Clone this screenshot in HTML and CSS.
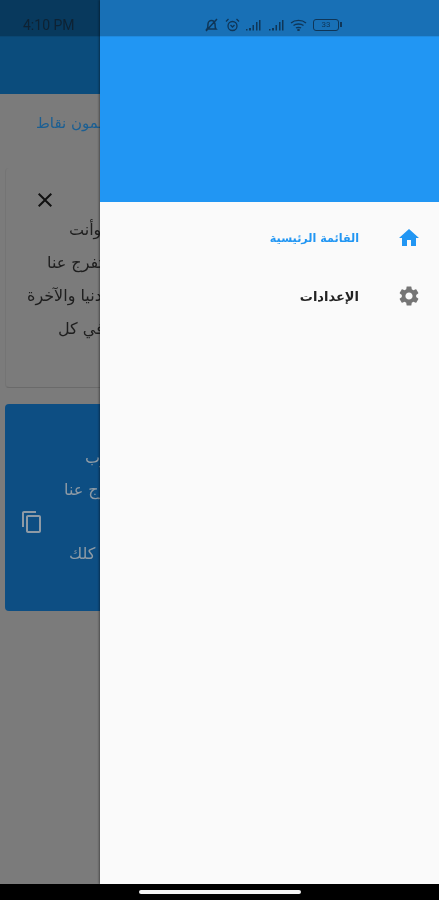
FILE: index.html
```html
<!DOCTYPE html>
<html lang="ar">
<head>
    <meta charset="UTF-8">
    <meta name="viewport" content="width=device-width, initial-scale=1.0">
    <title>القائمة الرئيسية</title>
    <link rel="stylesheet" href="styles.css">
</head>
<body>
    <div class="screen">
        <div class="app">
            <div class="app-bar"></div>
            <div class="content">
                <p class="points" dir="rtl">مضمون نقاط</p>
                <div class="card plain">
                    <svg class="close-icon" viewBox="0 0 24 24"><path d="M19 6.41 17.59 5 12 10.59 6.41 5 5 6.41 10.59 12 5 17.59 6.41 19 12 13.41 17.59 19 19 17.59 13.41 12z"/></svg>
                    <div class="dua" dir="rtl">
                        <p>اللهم إني أسألك وأنت</p>
                        <p>رب العالمين أن تفرج عنا</p>
                        <p>وترزقنا خير الدنيا والآخرة</p>
                        <p>وأن توفقنا في كل</p>
                    </div>
                </div>
                <div class="card blue">
                    <svg class="copy-icon" viewBox="0 0 24 24"><path d="M16 1H4c-1.1 0-2 .9-2 2v14h2V3h12V1zm3 4H8c-1.1 0-2 .9-2 2v14c0 1.1.9 2 2 2h11c1.1 0 2-.9 2-2V7c0-1.1-.9-2-2-2zm0 16H8V7h11v14z"/></svg>
                    <div class="dua" dir="rtl">
                        <p>اللهم إني أسألك يا رب</p>
                        <p>رب العالمين أن تفرج عنا</p>
                        <p>&nbsp;</p>
                        <p>وأن أكون من أهل كلك</p>
                    </div>
                </div>
            </div>
        </div>

        <div class="drawer" dir="rtl">
            <div class="drawer-header"></div>
            <div class="drawer-list">
                <div class="drawer-item active">
                    <svg viewBox="0 0 24 24"><path d="M10 20v-6h4v6h5v-8h3L12 3 2 12h3v8z"/></svg>
                    <span>القائمة الرئيسية</span>
                </div>
                <div class="drawer-item">
                    <svg viewBox="0 0 24 24"><path d="M19.14 12.94c.04-.3.06-.61.06-.94 0-.32-.02-.64-.07-.94l2.03-1.58a.49.49 0 0 0 .12-.61l-1.92-3.32a.488.488 0 0 0-.59-.22l-2.39.96c-.5-.38-1.03-.7-1.62-.94l-.36-2.54a.484.484 0 0 0-.48-.41h-3.84c-.24 0-.43.17-.47.41l-.36 2.54c-.59.24-1.13.57-1.62.94l-2.39-.96c-.22-.08-.47 0-.59.22L2.74 8.87c-.12.21-.08.47.12.61l2.03 1.58c-.05.3-.09.63-.09.94s.02.64.07.94l-2.03 1.58a.49.49 0 0 0-.12.61l1.92 3.32c.12.22.37.29.59.22l2.39-.96c.5.38 1.03.7 1.62.94l.36 2.54c.05.24.24.41.48.41h3.84c.24 0 .44-.17.47-.41l.36-2.54c.59-.24 1.13-.56 1.62-.94l2.39.96c.22.08.47 0 .59-.22l1.92-3.32c.12-.22.07-.47-.12-.61l-2.01-1.58zM12 15.6c-1.98 0-3.6-1.62-3.6-3.6s1.62-3.6 3.6-3.6 3.6 1.62 3.6 3.6-1.62 3.6-3.6 3.6z"/></svg>
                    <span>الإعدادات</span>
                </div>
            </div>
        </div>

        <div class="status-bar">
            <span class="time">4:10 PM</span>
            <div class="status-icons">
                <svg width="15" height="14" viewBox="0 0 15 14" fill="none" stroke="currentColor" stroke-width="1.5"><path d="M3 11c1-1 1-3 1-5a3.500 3.500 0 0 1 7 0c0 2 0 4 1 5zM2 13 13 1"/></svg>
                <svg width="15" height="14" viewBox="0 0 15 14" fill="none" stroke="currentColor" stroke-width="1.3"><circle cx="7.5" cy="8" r="4.5"/><path d="M1 3.500 3.500 1M14 3.500 11.500 1M5.500 7l2 2 2-2"/></svg>
                <svg width="17" height="12" viewBox="0 0 17 12" fill="currentColor"><path d="M1 10h1.500v1.500H1zM4 9h2v2.500H4zM7.500 6H9v5.500H7.500zM11 3h1.500v8.500H11zM14 1h1.500v10.500H14z"/></svg>
                <svg width="17" height="12" viewBox="0 0 17 12" fill="currentColor"><path d="M1 10h1.500v1.500H1zM4 9h2v2.500H4zM7.500 6H9v5.500H7.500zM11 3h1.500v8.500H11zM14 1h1.500v10.500H14z"/></svg>
                <svg width="17" height="12" viewBox="0 0 17 12" fill="none" stroke="currentColor" stroke-width="1.4"><path d="M1 4c4-3.500 11-3.500 15 0M3.500 6.500c2.500-2 7.500-2 10 0M6 9c1-.8 4-.8 5 0"/><circle cx="8.500" cy="11" r=".6"/></svg>
                <div class="battery"><span>33</span></div>
            </div>
        </div>

        <div class="nav-bar"><div class="home-pill"></div></div>
    </div>
</body>
</html>
```

FILE: styles.css
```css
* {
    box-sizing: border-box;
}
body {
    margin: 0;
    font-family: "DejaVu Sans", "Noto Sans", sans-serif;
    background-color: #000;
}
p {
    margin: 0;
}
/* the reference is an upscaled capture, so everything is a little soft */
.screen {
    position: relative;
    width: 439px;
    height: 900px;
    overflow: hidden;
    display: flex;
    flex-direction: column;
    filter: blur(0.4px);
}
.app {
    flex: 1;
    display: flex;
    flex-direction: column;
    background-color: #7b7b7b;
}
.app-bar {
    height: 94px;
    background-color: #0b4c7c;
}
.content {
    flex: 1;
    padding-left: 5px;
}
.points {
    height: 74px;
    padding-top: 18px;
    margin-left: 31px;
    width: 110px;
    font-size: 15px;
    line-height: 22px;
    white-space: nowrap;
    text-align: left;
    color: #1b5f93;
}
.card {
    display: flex;
    align-items: flex-start;
    width: 430px;
    border-radius: 4px;
}
.plain {
    height: 220px;
    margin-bottom: 16px;
    border-left: 1px solid #747474;
    border-bottom: 1px solid #6a6a6a;
    padding: 20px 0 0 27px;
    color: #1e1e1e;
}
.blue {
    height: 207px;
    background-color: #0d4e83;
    padding-left: 15px;
    color: #8f9ba5;
}
.close-icon {
    width: 24px;
    height: 24px;
    flex: none;
    fill: #111;
}
.copy-icon {
    width: 24px;
    height: 24px;
    flex: none;
    margin-top: 106px;
    fill: #8e9aa5;
}
.dua {
    font-size: 16px;
    white-space: nowrap;
    text-align: left;
    width: 320px;
}
.plain .dua {
    line-height: 33px;
    margin: 25px 0 0 -57px;
}
.blue .dua {
    line-height: 32px;
    margin: 38px 0 0 -44px;
}
/* each line is centred in the real app; here only its left end shows */
.plain .dua p:nth-child(1) {
    margin-left: 69px;
}
.plain .dua p:nth-child(2) {
    margin-left: 47px;
}
.plain .dua p:nth-child(3) {
    margin-left: 27px;
}
.plain .dua p:nth-child(4) {
    margin-left: 58px;
}
.blue .dua p:nth-child(1) {
    margin-left: 85px;
}
.blue .dua p:nth-child(2) {
    margin-left: 64px;
}
.blue .dua p:nth-child(4) {
    margin-left: 69px;
}
.drawer {
    position: absolute;
    left: 100px;
    top: 0;
    bottom: 16px;
    right: 0;
    display: flex;
    flex-direction: column;
    background-color: #fafafa;
    box-shadow: -1px 0 2px rgba(0, 0, 0, 0.4);
}
.drawer-header {
    height: 202px;
    background-color: #2196f3;
}
.drawer-list {
    padding-top: 7px;
}
.drawer-item {
    display: flex;
    align-items: center;
    gap: 38px;
    height: 58px;
    padding: 0 18px;
    font-size: 13px;
    font-weight: bold;
    color: #222;
}
.drawer-item svg {
    width: 24px;
    height: 24px;
    fill: #757575;
}
.drawer-item.active {
    font-size: 11.2px;
    color: #2196f3;
}
.drawer-item.active svg {
    fill: #2196f3;
}
.status-bar {
    position: absolute;
    top: 0;
    left: 0;
    right: 0;
    height: 36px;
    display: flex;
    align-items: center;
    padding: 16px 0 3px 23px;
    background-color: rgba(0, 0, 0, 0.25);
    box-shadow: 0 1px 0 rgba(0, 0, 0, 0.08);
}
.time {
    width: 181px;
    font-family: "Roboto", sans-serif;
    font-size: 14px;
    color: #0e2233;
}
.status-icons {
    display: flex;
    align-items: center;
    gap: 5.6px;
    color: #0f3658;
}
.battery {
    position: relative;
    width: 26px;
    height: 12px;
    border: 1.4px solid #0f3658;
    border-radius: 3px;
    font-family: "Roboto", sans-serif;
    font-size: 8px;
    line-height: 9px;
    text-align: center;
}
.battery::after {
    content: "";
    position: absolute;
    right: -4px;
    top: 2px;
    width: 2px;
    height: 5px;
    background-color: #0f3658;
}
.nav-bar {
    height: 16px;
    flex: none;
    background-color: #000;
    padding-top: 6px;
    display: flex;
    justify-content: center;
}
.home-pill {
    width: 162px;
    height: 4px;
    border-radius: 2px;
    background-color: #f4f4f4;
}
```
